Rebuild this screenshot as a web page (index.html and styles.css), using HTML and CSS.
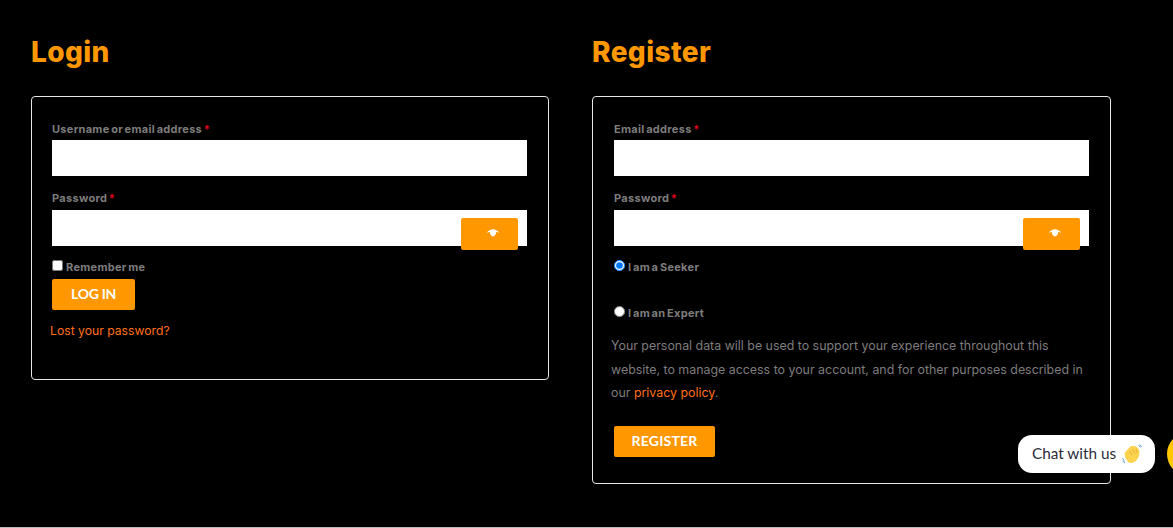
FILE: index.html
```html
<!DOCTYPE html>
<html lang="en">
<head>
<meta charset="utf-8">
<title>My account</title>
<link rel="stylesheet" href="styles.css">
</head>
<body>
<main class="page">
  <section class="col">
    <h2 class="title">Login</h2>
    <form class="box box-login">
      <div class="field">
        <label class="lbl">Username or email address <span class="req">*</span></label>
        <div class="input"></div>
      </div>
      <div class="field field-pw">
        <label class="lbl">Password <span class="req">*</span></label>
        <div class="input"></div>
        <button type="button" class="eye"><svg width="14" height="8" viewBox="0 0 14 8"><path d="M0.500 4C2.500 1.500 4.800 0.300 7 0.300S11.500 1.500 13.500 4C12 3.300 11 3 10.200 3C10.200 5.300 8.600 7.500 7 7.500S3.800 5.300 3.800 3C3 3 2 3.300 0.500 4Z" fill="#fff"/></svg></button>
      </div>
      <div class="check-row"><input type="checkbox" class="tick"><span class="opt">Remember me</span></div>
      <button type="button" class="btn btn-login">LOG IN</button>
      <a class="lost">Lost your password?</a>
    </form>
  </section>
  <section class="col">
    <h2 class="title">Register</h2>
    <form class="box box-reg">
      <div class="field">
        <label class="lbl">Email address <span class="req">*</span></label>
        <div class="input"></div>
      </div>
      <div class="field field-pw">
        <label class="lbl">Password <span class="req">*</span></label>
        <div class="input"></div>
        <button type="button" class="eye"><svg width="14" height="8" viewBox="0 0 14 8"><path d="M0.500 4C2.500 1.500 4.800 0.300 7 0.300S11.500 1.500 13.500 4C12 3.300 11 3 10.200 3C10.200 5.300 8.600 7.500 7 7.500S3.800 5.300 3.800 3C3 3 2 3.300 0.500 4Z" fill="#fff"/></svg></button>
      </div>
      <div class="check-row"><input type="radio" name="role" class="tick" checked><span class="opt">I am a Seeker</span></div>
      <div class="check-row row-expert"><input type="radio" name="role" class="tick"><span class="opt">I am an Expert</span></div>
      <p class="policy">Your personal data will be used to support your experience throughout this website, to manage access to your account, and for other purposes described in our <a class="link">privacy policy</a>.</p>
      <button type="button" class="btn btn-reg">REGISTER</button>
    </form>
  </section>
</main>
<div class="chat">Chat with us
  <svg class="wave" width="20" height="20" viewBox="0 0 20 20">
    <path d="M5.500 5.500L9 2L12.500 2L15.500 3.500L17.500 7L17 12L14.500 16.500L10.500 19L6.500 18.500L3.500 14L2.500 9.500Z" fill="#fbd34e"/>
    <path d="M7.500 7L10 11M10.500 5L13 9.500M14 5L15 9" stroke="#e9b33a" stroke-width="1" fill="none"/>
    <path d="M16.500 1L18.500 3.500M18 0.500L19.500 3M0.500 14L2.500 17.500M0.500 17L3 19" stroke="#6fa6d6" stroke-width="1" fill="none"/>
  </svg>
</div>
<div class="bubble"></div>
</body>
</html>
```
FILE: styles.css
```css
* { box-sizing: border-box; }
html, body { margin: 0; height: 528px; overflow: hidden; background: #000; }
body { border-bottom: 1px solid #bbb; font-family: "Inter", "Roboto", sans-serif; position: relative; }
.page { display: grid; grid-template-columns: 518px 519px; column-gap: 43px; padding: 36px 0 0 31px; }
.title { margin: 0 0 27px; font-family: "Inter", sans-serif; font-size: 28px; line-height: 33px; font-weight: 800; color: #ff9800; letter-spacing: 0.4px; }
.box { border: 1px solid #e6e6e6; border-radius: 4px; padding: 24px 21px 0 20px; }
.box-login { height: 284px; }
.box-reg { height: 388px; padding-left: 21px; }
.field { margin-bottom: 14px; position: relative; }
.lbl { display: block; font-size: 11px; line-height: 16px; font-weight: 700; color: #7d7d7d; margin-bottom: 3px; letter-spacing: 0.3px; word-spacing: -1.3px; }
.req { color: #e0001b; }
.input { height: 36px; background: #fff; }
.field-pw { margin-bottom: 10px; }
.field-pw .lbl { margin-bottom: 4px; }
.eye { position: absolute; right: 9px; top: 28px; width: 57px; height: 32px; background: #ff9800; border: 0; border-radius: 2px; padding: 0 0 3px 7px; display: flex; align-items: center; justify-content: center; }
.check-row { display: flex; align-items: center; height: 20px; margin-bottom: 3px; }
.row-expert { margin-top: 26px; margin-bottom: 12px; }
.tick { width: 11px; height: 11px; margin: 0 3px 1px 0; flex: none; }
.opt { font-size: 11px; line-height: 16px; font-weight: 700; color: #7d7d7d; letter-spacing: 0.3px; word-spacing: -1.3px; position: relative; top: 1px; }
.btn { display: block; border: 0; border-radius: 2px; background: #ff9800; color: #fff; font-family: "Lato", sans-serif; font-weight: 700; font-size: 14px; letter-spacing: 0.2px; height: 31px; padding: 0 0 2px; }
.btn-login { width: 83px; letter-spacing: -0.3px; }
.btn-reg { width: 101px; margin-top: 21px; }
.lost { display: block; margin: 12px 0 0 -2px; font-family: "Inter", sans-serif; font-size: 12.200px; line-height: 18px; color: #ff6f1a; }
.policy { margin: 0 0 0 -3px; width: 480px; font-size: 12.400px; line-height: 23.500px; color: #7d7d7d; }
.link { color: #ff6f1a; }
.chat { position: absolute; left: 1018px; top: 435px; width: 137px; height: 38px; background: #fff; border-radius: 14px; display: flex; align-items: center; padding: 0 0 3px 14px; gap: 6px; font-family: "Lato", sans-serif; font-size: 15.300px; color: #2b2b3a; white-space: nowrap; }
.wave { flex: none; margin-top: 3px; }
.bubble { position: absolute; left: 1167px; top: 432px; width: 44px; height: 44px; border-radius: 50%; background: #ffc800; }
```
